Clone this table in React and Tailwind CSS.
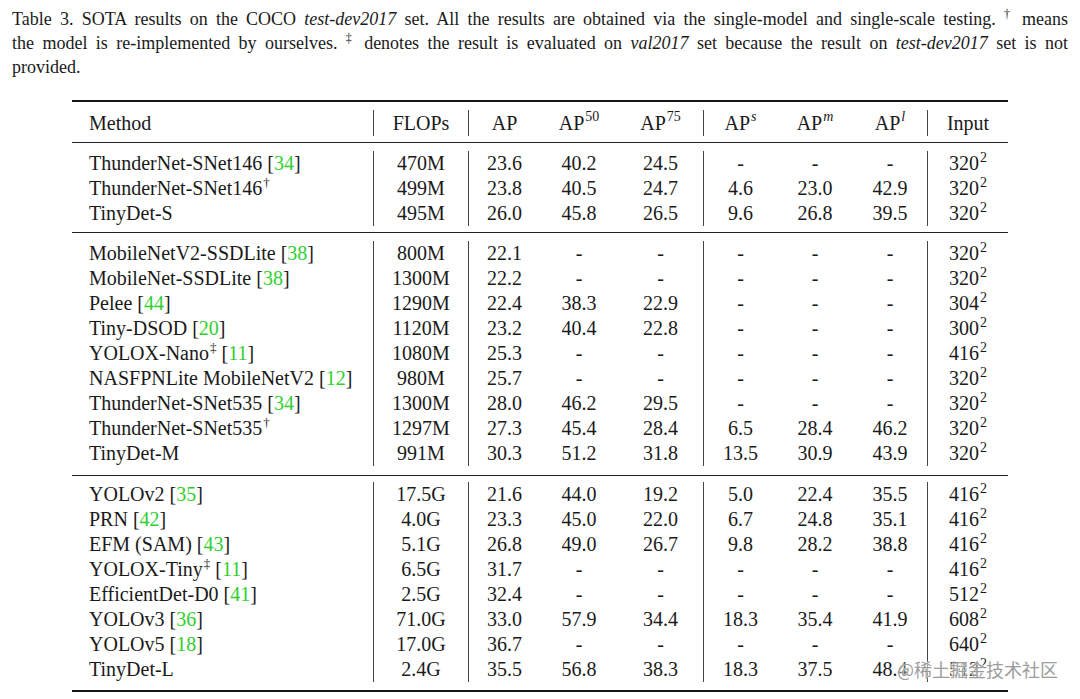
import React from 'react';

const serif = { fontFamily: '"Liberation Serif", "Times New Roman", serif' };

// column widths in px, separators drawn as border-r on the cell before them
const cols = [
  { w: 'w-[302px]', sep: true, left: true },
  { w: 'w-[95px]', sep: true },
  { w: 'w-[71px]' },
  { w: 'w-[78px]' },
  { w: 'w-[86px]', sep: true },
  { w: 'w-[73px]' },
  { w: 'w-[76px]' },
  { w: 'w-[75px]', sep: true },
  { w: 'w-[80px]' },
];

const Ref = ({ n }) => (
  <>
    {' '}[<span className="text-[#2fcf2f]">{n}</span>]
  </>
);

const Sq = ({ v }) => (
  <>
    {v}
    <sup className="text-[14px] top-[-0.55em] ml-[1px]">2</sup>
  </>
);

const Mark = ({ c }) => <sup className="text-[13px] top-[-0.6em] ml-[1px]">{c}</sup>;

const dash = ['-', '-', '-'];

const groups = [
  {
    pt: 'h-[8px]',
    pb: 'h-[6px]',
    rows: [
      [<>ThunderNet-SNet146<Ref n="34" /></>, '470M', '23.6', '40.2', '24.5', ...dash, <Sq v="320" />],
      [<>ThunderNet-SNet146<Mark c="†" /></>, '499M', '23.8', '40.5', '24.7', '4.6', '23.0', '42.9', <Sq v="320" />],
      ['TinyDet-S', '495M', '26.0', '45.8', '26.5', '9.6', '26.8', '39.5', <Sq v="320" />],
    ],
  },
  {
    pt: 'h-[8px]',
    pb: 'h-[9px]',
    rows: [
      [<>MobileNetV2-SSDLite<Ref n="38" /></>, '800M', '22.1', '-', '-', ...dash, <Sq v="320" />],
      [<>MobileNet-SSDLite<Ref n="38" /></>, '1300M', '22.2', '-', '-', ...dash, <Sq v="320" />],
      [<>Pelee<Ref n="44" /></>, '1290M', '22.4', '38.3', '22.9', ...dash, <Sq v="304" />],
      [<>Tiny-DSOD<Ref n="20" /></>, '1120M', '23.2', '40.4', '22.8', ...dash, <Sq v="300" />],
      [<>YOLOX-Nano<Mark c="‡" /><Ref n="11" /></>, '1080M', '25.3', '-', '-', ...dash, <Sq v="416" />],
      [<>NASFPNLite MobileNetV2<Ref n="12" /></>, '980M', '25.7', '-', '-', ...dash, <Sq v="320" />],
      [<>ThunderNet-SNet535<Ref n="34" /></>, '1300M', '28.0', '46.2', '29.5', ...dash, <Sq v="320" />],
      [<>ThunderNet-SNet535<Mark c="†" /></>, '1297M', '27.3', '45.4', '28.4', '6.5', '28.4', '46.2', <Sq v="320" />],
      ['TinyDet-M', '991M', '30.3', '51.2', '31.8', '13.5', '30.9', '43.9', <Sq v="320" />],
    ],
  },
  {
    pt: 'h-[6px]',
    pb: 'h-[8px]',
    rows: [
      [<>YOLOv2<Ref n="35" /></>, '17.5G', '21.6', '44.0', '19.2', '5.0', '22.4', '35.5', <Sq v="416" />],
      [<>PRN<Ref n="42" /></>, '4.0G', '23.3', '45.0', '22.0', '6.7', '24.8', '35.1', <Sq v="416" />],
      [<>EFM (SAM)<Ref n="43" /></>, '5.1G', '26.8', '49.0', '26.7', '9.8', '28.2', '38.8', <Sq v="416" />],
      [<>YOLOX-Tiny<Mark c="‡" /><Ref n="11" /></>, '6.5G', '31.7', '-', '-', ...dash, <Sq v="416" />],
      [<>EfficientDet-D0<Ref n="41" /></>, '2.5G', '32.4', '-', '-', ...dash, <Sq v="512" />],
      [<>YOLOv3<Ref n="36" /></>, '71.0G', '33.0', '57.9', '34.4', '18.3', '35.4', '41.9', <Sq v="608" />],
      [<>YOLOv5<Ref n="18" /></>, '17.0G', '36.7', '-', '-', ...dash, <Sq v="640" />],
      ['TinyDet-L', '2.4G', '35.5', '56.8', '38.3', '18.3', '37.5', '48.4', <Sq v="512" />],
    ],
  },
];

const Hsup = ({ children, italic }) => (
  <sup className={`text-[14px] top-[-0.65em] ml-[1px] ${italic ? 'italic' : ''}`}>{children}</sup>
);

const header = [
  'Method',
  'FLOPs',
  'AP',
  <>AP<Hsup>50</Hsup></>,
  <>AP<Hsup>75</Hsup></>,
  <>AP<Hsup italic>s</Hsup></>,
  <>AP<Hsup italic>m</Hsup></>,
  <>AP<Hsup italic>l</Hsup></>,
  'Input',
];

const Row = ({ cells, h = 'h-[25px] leading-[25px]' }) => (
  <div className={`flex ${h}`}>
    {cells.map((c, i) => (
      <div
        key={i}
        className={`${cols[i].w} shrink-0 whitespace-nowrap ${
          cols[i].left ? 'text-left pl-[17px]' : 'text-center'
        } ${cols[i].sep ? 'border-r border-[#444]' : ''}`}
      >
        {c}
      </div>
    ))}
  </div>
);

const Rule = ({ thick }) => (
  <div className={`${thick ? 'h-[2px] bg-[#141414]' : 'h-[1px] bg-[#222]'}`} />
);

export default function App() {
  return (
    <div className="relative w-[1080px] h-[699px] overflow-hidden bg-white text-[#1a1a1a]" style={serif}>
      {/* caption */}
      <div className="px-3 pt-[7px] text-[18px] leading-[24px]">
        <div className="text-justify [text-align-last:justify] whitespace-nowrap">
          Table 3. SOTA results on the COCO <i>test-dev2017</i> set. All the results are obtained via the
          single-model and single-scale testing. <sup className="text-[12px] top-[-0.6em]">†</sup> means
        </div>
        <div className="text-justify [text-align-last:justify]">
          the model is re-implemented by ourselves. <sup className="text-[12px] top-[-0.6em]">‡</sup> denotes
          the result is evaluated on <i>val2017</i> set because the result on <i>test-dev2017</i> set is not
        </div>
        <div>provided.</div>
      </div>

      {/* table */}
      <div className="mx-auto mt-[21px] w-[936px] text-[20px]">
        <Rule thick />
        <div className="h-[8px]" />
        <Row cells={header} h="h-[26px] leading-[26px]" />
        <div className="h-[6px]" />
        {groups.map((g, gi) => (
          <div key={gi}>
            <Rule />
            <div className={g.pt} />
            {g.rows.map((r, ri) => (
              <Row key={ri} cells={r} />
            ))}
            <div className={g.pb} />
          </div>
        ))}
        <Rule thick />
      </div>

      {/* watermark */}
      <div
        className="absolute right-[22px] top-[656px] text-[18px] leading-[26px] text-[#9c9c9c] [text-shadow:0_0_2px_#fff,0_0_2px_#fff]"
        style={{ fontFamily: '"Noto Sans CJK SC", "Noto Sans", sans-serif' }}
      >
        @稀土掘金技术社区
      </div>
    </div>
  );
}
